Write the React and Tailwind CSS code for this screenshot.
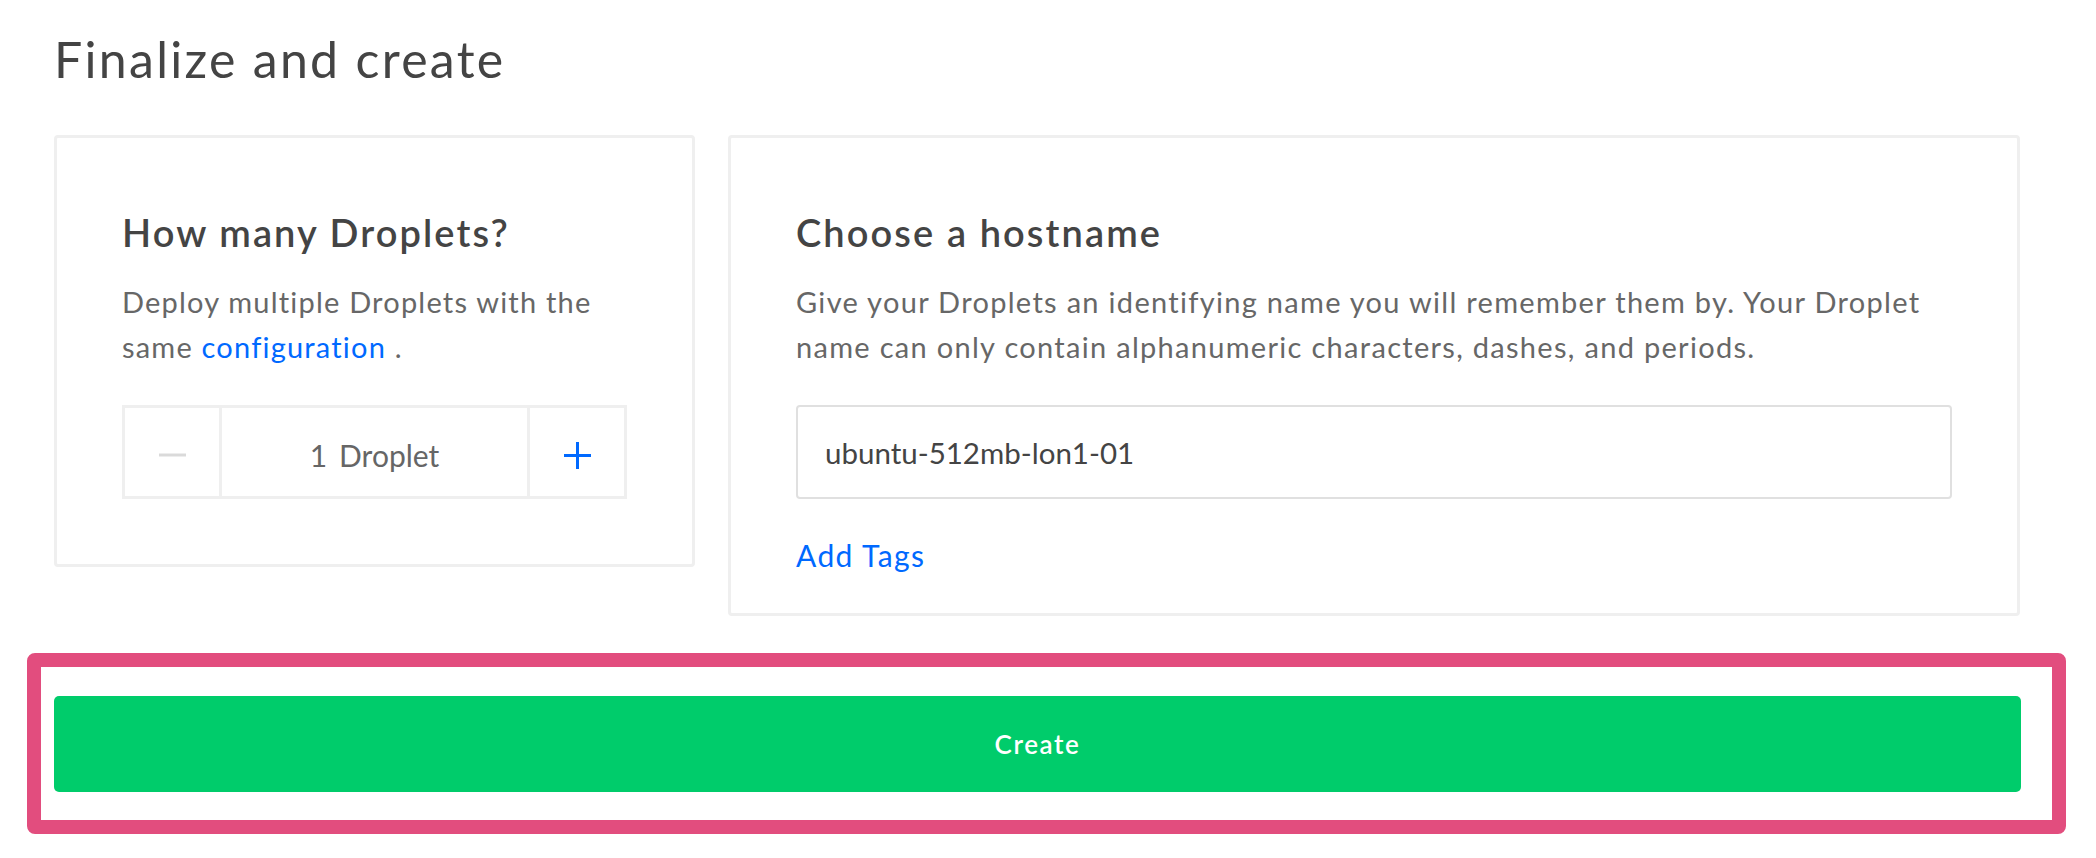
import React from 'react'

const Stepper = () => {
  return (
    <div className="mt-[36px] flex h-[94px] border-[3px] border-[#efefef]">
      <button className="flex w-[94px] items-center justify-center pt-[6px]">
        <svg width="27" height="4" viewBox="0 0 27 4">
          <line x1="0" y1="2" x2="27" y2="2" stroke="#dadada" strokeWidth="3" />
        </svg>
      </button>
      <div className="flex flex-1 items-center justify-center border-x-[3px] border-[#efefef] pt-[6px] text-[30px] text-[#666]">
        <span>1</span>
        <span className="ml-[12px]">Droplet</span>
      </div>
      <button className="flex w-[94px] items-center justify-center pt-[6px]">
        <svg width="27" height="27" viewBox="0 0 27 27">
          <line x1="0" y1="13.5" x2="27" y2="13.5" stroke="#0069ff" strokeWidth="3" />
          <line x1="13.5" y1="0" x2="13.5" y2="27" stroke="#0069ff" strokeWidth="3" />
        </svg>
      </button>
    </div>
  )
}

const App = () => {
  return (
    <div className="min-h-screen bg-white font-['Lato','Open_Sans',sans-serif]">
      <div className="ml-[54px] w-[1966px] pt-[29px]">
        <h2 className="text-[50px] font-normal leading-[60px] tracking-[2.3px] text-[#444]">Finalize and create</h2>

        <div className="mt-[46px] grid grid-cols-[641px_1fr] items-start gap-[33px]">
          {/* droplet count */}
          <div className="rounded-[4px] border-[3px] border-[#efefef] bg-white px-[65px] pb-[65px] pt-[71px]">
            <h3 className="text-[38px] font-semibold leading-[46px] tracking-[2.1px] text-[#444]">How many Droplets?</h3>
            <p className="mt-[24px] text-[29px] leading-[45px] tracking-[1.2px] text-[#676767]">
              <span className="block">Deploy multiple Droplets with the</span>
              <span>same </span>
              <a href="#" className="text-[#0069ff]">configuration</a>
              <span> .</span>
            </p>
            <Stepper />
          </div>

          {/* hostname */}
          <div className="rounded-[4px] border-[3px] border-[#efefef] bg-white px-[65px] pb-[35px] pt-[71px]">
            <h3 className="text-[38px] font-semibold leading-[46px] tracking-[2.1px] text-[#444]">Choose a hostname</h3>
            <p className="mt-[24px] text-[29px] leading-[45px] tracking-[1.3px] text-[#676767]">
              Give your Droplets an identifying name you will remember them by. Your Droplet name can only contain alphanumeric characters, dashes, and periods.
            </p>
            <input
              type="text"
              defaultValue="ubuntu-512mb-lon1-01"
              className="mt-[36px] block h-[94px] w-full rounded-[4px] border-2 border-[#e0e0e0] px-[27px] text-[29.5px] text-[#444] outline-none"
            />
            <a href="#" className="mt-[34px] block text-[30px] leading-[45px] tracking-[1.4px] text-[#0069ff]">Add Tags</a>
          </div>
        </div>
      </div>

      <div className="ml-[27px] mt-[37px] w-[2039px] rounded-[8px] border-[14px] border-[#e24d7e] pb-[28px] pl-[13px] pr-[31px] pt-[29px]">
        <button className="flex h-[96px] w-full items-center justify-center rounded-[5px] bg-[#00cc6b] text-[26px] font-semibold tracking-[1.6px] text-white">
          Create
        </button>
      </div>
    </div>
  )
}

export default App
